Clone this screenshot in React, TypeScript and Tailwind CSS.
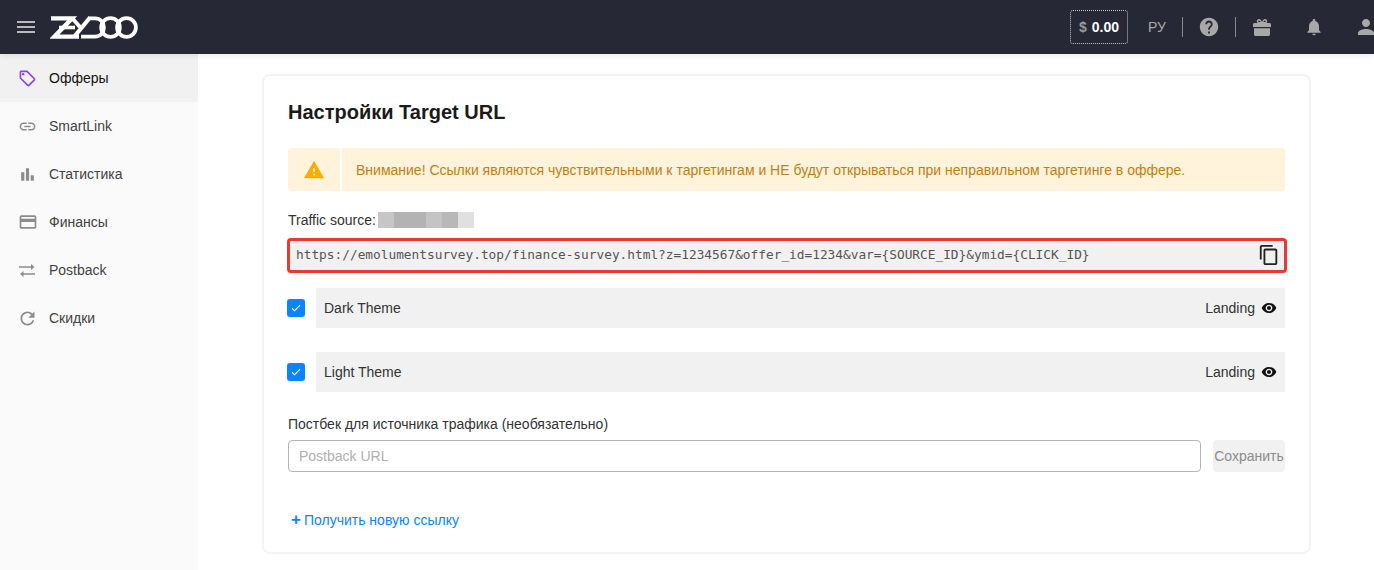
import React from 'react';
import {
  MdMenu, MdOutlineLocalOffer, MdLink, MdBarChart, MdCreditCard, MdRefresh,
  MdContentCopy, MdVisibility, MdHelp, MdNotifications, MdPerson, MdWarning, MdCheck,
} from 'react-icons/md';

// Material's swap_horiz has shorter bars than the one in the picture
const PostbackIcon = ({ size, className }: { size: number; className?: string }) => (
  <svg width={size} height={size} viewBox="0 0 19 19" fill="currentColor" className={className}>
    <path d="M1 5.2H13V3L16.5 6 13 9V6.8H1Z" />
    <path d="M17 12.2H5.5V10L2 13 5.5 16V13.8H17Z" />
  </svg>
);

const GiftIcon = () => (
  <svg width="18" height="17" viewBox="0 0 18 17" fill="currentColor" className="ml-[17px]">
    <path d="M0 5.5C0 4.7.7 4 1.5 4H16.5C17.3 4 18 4.7 18 5.5V8H0Z" />
    <path d="M1 9.2H17V15.5C17 16.3 16.3 17 15.5 17H2.5C1.7 17 1 16.3 1 15.5Z" />
    <path d="M9 4.5C7.5 4.5 4.2 4.5 3.8 3 3.4 1.2 4.8 0 6 0 7.5 0 8.5 1.6 9 3 9.5 1.6 10.5 0 12 0 13.2 0 14.6 1.2 14.2 3 13.8 4.5 10.5 4.5 9 4.5ZM6 1.5C5.2 1.5 5 2.7 5.7 3H7.6C7.3 2.3 6.7 1.5 6 1.5ZM12 1.5C11.3 1.5 10.7 2.3 10.4 3H12.3C13 2.7 12.8 1.5 12 1.5Z" fillRule="evenodd" />
  </svg>
);

const NAV = [
  { label: 'Офферы', icon: MdOutlineLocalOffer, size: 19, active: true },
  { label: 'SmartLink', icon: MdLink, size: 19 },
  { label: 'Статистика', icon: MdBarChart, size: 19 },
  { label: 'Финансы', icon: MdCreditCard, size: 20 },
  { label: 'Postback', icon: PostbackIcon, size: 19 },
  { label: 'Скидки', icon: MdRefresh, size: 21 },
];

const MOSAIC = ['bg-[#c6c6c6]', 'bg-[#b3b3b3]', 'bg-[#b3b3b3]', 'bg-[#c4c4c4]', 'bg-[#b8b8b8]', 'bg-[#e0e0e0]'];

const Logo = () => (
  <svg width="88" height="23" viewBox="0 0 88 23" fill="none" stroke="#fff" strokeWidth="3.6" className="ml-3">
    <path d="M1 2.4H22L4.5 20.6H29" strokeWidth="4.4" />
    <path d="M9 11.5H25" strokeWidth="3.6" />
    <path d="M22 2L30 11" strokeWidth="4" />
    <path d="M40 1.5L24 21" strokeWidth="4.2" />
    <path d="M38 2.4H45C51 2.4 54 7 54 11.5C54 16 51 20.6 45 20.6H31" />
    <circle cx="60.5" cy="11.5" r="9.4" />
    <circle cx="76.5" cy="11.5" r="9.4" strokeWidth="3.8" />
  </svg>
);

const Header = () => (
  <header className="relative z-10 h-[54px] shrink-0 bg-[#262835] flex items-center shadow-[0_2px_6px_rgba(0,0,0,0.08)]">
    <MdMenu size={24} className="ml-[14px] text-[#b9b9b9]" />
    <Logo />
    <div className="ml-auto flex items-center text-[#a8a8a8]">
      <div className="w-[58px] h-[34px] flex items-center justify-center gap-[5px] border border-dotted border-[#c8c8c8] rounded-[3px] text-[14px] font-bold">
        <span className="text-[#9a9a9a]">$</span>
        <span className="text-white">0.00</span>
      </div>
      <span className="ml-5 text-[14px]">РУ</span>
      <div className="ml-4 w-px h-5 bg-[#8a8a8a]" />
      <MdHelp size={22} className="ml-[15px]" />
      <div className="ml-[15px] w-px h-5 bg-[#8a8a8a]" />
      <GiftIcon />
      <MdNotifications size={20} className="ml-[33px]" />
      <MdPerson size={24} className="ml-[30px] -mr-[4px]" />
    </div>
  </header>
);

const Sidebar = () => (
  <aside className="w-[198px] shrink-0 bg-[#fafafa]">
    {NAV.map(({ label, icon: Icon, size, active }) => (
      <div key={label} className={`h-12 pl-[18px] flex items-center gap-[12px] text-[14px] ${active ? 'bg-[#f1f1f1] text-[#111]' : 'text-[#424242]'}`}>
        <span className="w-[19px] flex justify-center">
          <Icon size={size} className={`shrink-0 ${active ? 'text-[#8a3ff0]' : 'text-[#8c8c8c]'}`} />
        </span>
        {label}
      </div>
    ))}
  </aside>
);

const ThemeRow = ({ name }: { name: string }) => (
  <div className="flex items-center">
    <div className="w-[18px] h-[18px] -ml-px rounded-[3px] bg-[#0a84ff] flex items-center justify-center">
      <MdCheck size={12} className="text-white" />
    </div>
    <div className="ml-[11px] flex-1 h-10 bg-[#f1f1f1] px-2 flex items-center justify-between text-[14px] text-[#333]">
      <span>{name}</span>
      <span className="flex items-center gap-[6px]">
        Landing
        <MdVisibility size={16} className="text-[#111]" />
      </span>
    </div>
  </div>
);

export default function App() {
  return (
    <div className="h-[570px] overflow-hidden flex flex-col bg-white font-['Liberation_Sans',Arial,sans-serif]">
      <Header />
      <div className="flex-1 flex">
        <Sidebar />
        <main className="flex-1 pl-[64px] pr-[63px] pt-[20px]">
          <section className="h-[480px] border-2 border-[#f3f3f3] rounded-lg px-6">
            <h1 className="mt-[22px] text-[20px] leading-[28px] font-bold text-[#1a1a1a]">Настройки Target URL</h1>

            <div className="mt-[22px] h-[43px] flex gap-[2px] text-[14px] text-[#c07f10]">
              <div className="w-[52px] bg-[#fff3dc] rounded-l-[4px] flex items-center justify-center">
                <MdWarning size={22} className="text-[#ffab00]" />
              </div>
              <div className="flex-1 bg-[#fff3dc] rounded-r-[4px] pl-[14px] pt-px flex items-center">
                Внимание! Ссылки являются чувствительными к таргетингам и НЕ будут открываться при неправильном таргетинге в оффере.
              </div>
            </div>

            <div className="mt-[21px] h-4 flex items-center text-[14px] text-[#333]">
              Traffic source:
              <div className="ml-[2px] flex">
                {MOSAIC.map((c, i) => <div key={i} className={`w-4 h-4 ${c}`} />)}
              </div>
            </div>

            <div className="mt-[10px] -ml-px -mr-[2px] h-[35px] border-[3px] border-[#e53b32] rounded-[4px] bg-[#f1f1f1] pl-[6px] pr-[4px] pb-px flex items-center justify-between">
              <span className="font-['DejaVu_Sans_Mono',monospace] text-[12.8px] text-[#555]">
                https://emolumentsurvey.top/finance-survey.html?z=1234567&amp;offer_id=1234&amp;var=&#123;SOURCE_ID&#125;&amp;ymid=&#123;CLICK_ID&#125;
              </span>
              <MdContentCopy size={22} className="text-[#222]" />
            </div>

            <div className="mt-[15px] flex flex-col gap-6">
              <ThemeRow name="Dark Theme" />
              <ThemeRow name="Light Theme" />
            </div>

            <div className="mt-6 text-[14px] leading-4 text-[#333]">Постбек для источника трафика (необязательно)</div>
            <div className="mt-2 flex gap-3">
              <input
                placeholder="Postback URL"
                className="flex-1 h-8 px-[10px] text-[14px] border border-[#b5b5b5] rounded-[4px] outline-none placeholder:text-[#b0b0b0]"
              />
              <button className="w-[72px] h-8 bg-[#f1f1f1] rounded-[4px] text-[14px] text-[#8c8c8c]">Сохранить</button>
            </div>

            <div className="mt-10 ml-[3px] flex items-center gap-[3px] text-[14px] leading-4 text-[#0a84ff]">
              <span className="text-[17px] leading-4 font-bold">+</span>
              Получить новую ссылку
            </div>
          </section>
        </main>
      </div>
    </div>
  );
}
